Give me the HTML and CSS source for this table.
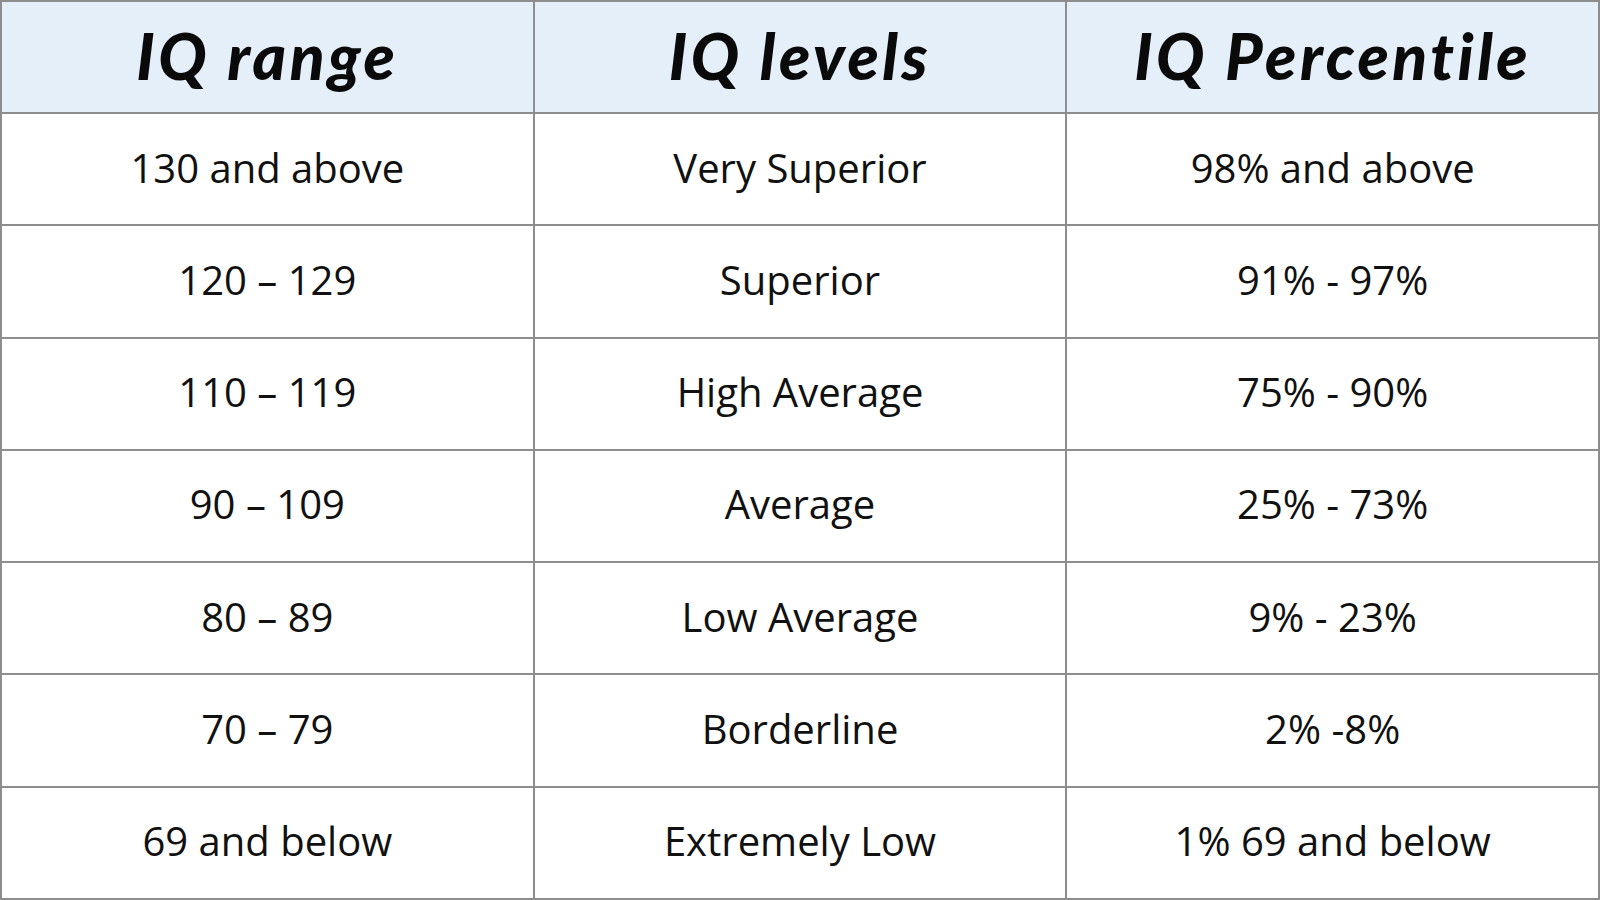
FILE: index.html
```html
<!DOCTYPE html>
<html>
<head>
<meta charset="utf-8">
<link rel="stylesheet" href="styles.css">
</head>
<body>
<table class="iq">
  <thead>
    <tr><th>IQ range</th><th>IQ levels</th><th>IQ Percentile</th></tr>
  </thead>
  <tbody>
    <tr><td>130 and above</td><td>Very Superior</td><td>98% and above</td></tr>
    <tr><td>120 – 129</td><td>Superior</td><td>91% - 97%</td></tr>
    <tr><td>110 – 119</td><td>High Average</td><td>75% - 90%</td></tr>
    <tr><td>90 – 109</td><td>Average</td><td>25% - 73%</td></tr>
    <tr><td>80 – 89</td><td>Low Average</td><td>9% - 23%</td></tr>
    <tr><td>70 – 79</td><td>Borderline</td><td>2% -8%</td></tr>
    <tr><td>69 and below</td><td>Extremely Low</td><td>1% 69 and below</td></tr>
  </tbody>
</table>
</body>
</html>
```
FILE: styles.css
```css
html, body {
  margin: 0;
  padding: 0;
  background: #ffffff;
}
.iq {
  width: 1600px;
  height: 900px;
  border-collapse: collapse;
  table-layout: fixed;
  font-family: "Open Sans", "Noto Sans", sans-serif;
  color: #111;
}
.iq th, .iq td {
  border: 2px solid #8d8d8d;
  text-align: center;
  vertical-align: middle;
  height: 106px;
  padding: 0 0 4px 0;
}
.iq th {
  background: #e4eff9;
  font-family: Lato, "Open Sans", sans-serif;
  font-style: italic;
  font-weight: 900;
  font-size: 64px;
  color: #0a0a0a;
  letter-spacing: 3.5px;
}
.iq td {
  font-size: 40px;
  font-weight: 400;
}
```
